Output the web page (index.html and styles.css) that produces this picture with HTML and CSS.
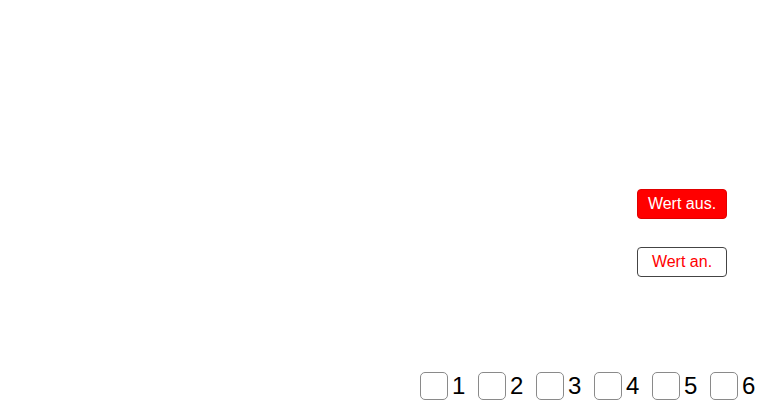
FILE: index.html
```html
<!DOCTYPE html>
<html lang="de">
<head>
<meta charset="utf-8">
<title>Wert</title>
<link rel="stylesheet" href="styles.css">
</head>
<body>
<div class="page">
  <div class="actions">
    <button class="btn btn-off" type="button">Wert aus.</button>
    <button class="btn btn-on" type="button">Wert an.</button>
  </div>
  <div class="checks">
    <label class="check"><span class="box"></span><span class="num">1</span></label>
    <label class="check"><span class="box"></span><span class="num">2</span></label>
    <label class="check"><span class="box"></span><span class="num">3</span></label>
    <label class="check"><span class="box"></span><span class="num">4</span></label>
    <label class="check"><span class="box"></span><span class="num">5</span></label>
    <label class="check"><span class="box"></span><span class="num">6</span></label>
  </div>
</div>
</body>
</html>
```
FILE: styles.css
```css
html, body {
  margin: 0;
  padding: 0;
  background: #fff;
}

.page {
  width: 775px;
  height: 415px;
  display: flex;
  flex-direction: column;
  font-family: "Liberation Sans", Arial, sans-serif;
}

.actions {
  display: flex;
  flex-direction: column;
  align-items: flex-end;
  gap: 28px;
  padding: 189px 48px 0 0;
}

.btn {
  width: 90px;
  height: 30px;
  box-sizing: border-box;
  font-family: "Liberation Sans", Arial, sans-serif;
  font-size: 16px;
  border-radius: 4px;
  padding: 0;
  cursor: pointer;
}

.btn-off {
  background: #ff0000;
  color: #fff;
  border: 1px solid #e00000;
}

.btn-on {
  background: #fff;
  color: #ff0000;
  border: 1px solid #444;
}

.checks {
  margin-top: auto;
  display: flex;
  padding: 0 0 15px 420px;
}

.check {
  width: 58px;
  display: flex;
  align-items: center;
  gap: 4px;
}

.box {
  width: 28px;
  height: 28px;
  box-sizing: border-box;
  border: 1px solid #8a8a8a;
  border-radius: 5px;
  background: #fff;
}

.num {
  font-size: 24px;
  color: #000;
  line-height: 28px;
}
```
